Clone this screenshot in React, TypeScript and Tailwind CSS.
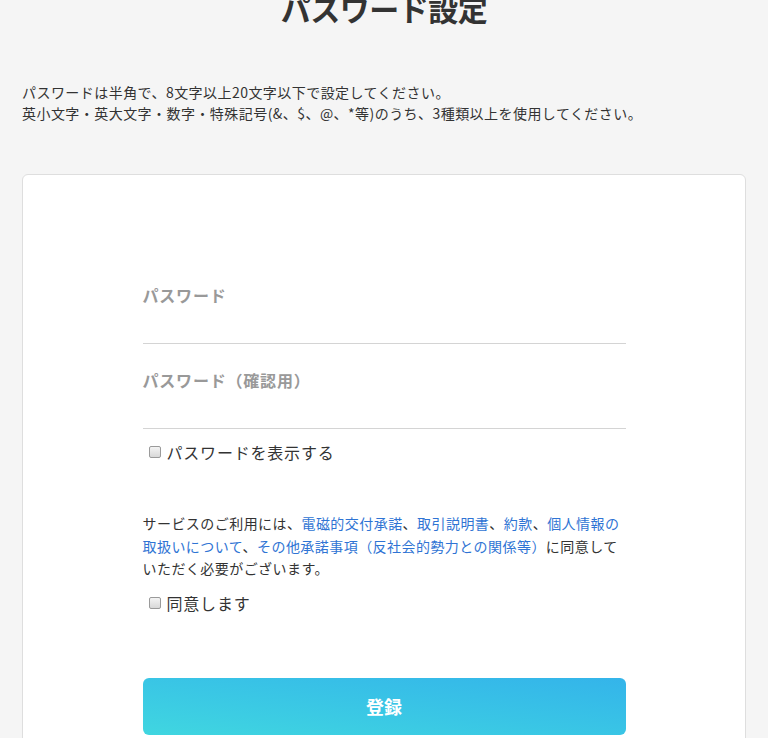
export default function App() {
  const font = { fontFamily: '"Noto Sans CJK JP", "Noto Sans", sans-serif' };

  return (
    <div className="min-h-[738px] bg-[#f5f5f5] px-[22px] text-[#333]" style={font}>
      <h1 className="mt-[-14px] text-center text-[30px] font-bold leading-[45px] tracking-[-0.5px] text-[#333]">
        パスワード設定
      </h1>

      <div className="mt-[51px] text-[14px] leading-[21px] tracking-[0.45px]">
        <p>パスワードは半角で、8文字以上20文字以下で設定してください。</p>
        <p>英小文字・英大文字・数字・特殊記号(&amp;、$、@、*等)のうち、3種類以上を使用してください。</p>
      </div>

      <div className="mt-[50px] rounded-[6px] border border-[#dedede] bg-white pb-10 pt-[108px]">
        <form className="mx-auto flex w-[483px] flex-col">
          <label className="flex flex-col">
            <span className="text-[16px] font-bold leading-6 tracking-[0.8px] text-[#999]">パスワード</span>
            <input type="password" className="h-[37px] border-b border-[#d4d4d4] outline-none" />
          </label>

          <label className="mt-[24px] flex flex-col">
            <span className="text-[16px] font-bold leading-6 tracking-[0.8px] text-[#999]">パスワード（確認用）</span>
            <input type="password" className="h-[37px] border-b border-[#d4d4d4] outline-none" />
          </label>

          <label className="mt-[11px] flex items-center gap-[6px] pl-[6px] text-[16px] leading-6 tracking-[0.8px]">
            <span className="h-[12px] w-[12px] shrink-0 rounded-[2px] border border-[#9a9a9a] bg-gradient-to-b from-[#f4f4f4] to-[#d8d8d8]" />
            パスワードを表示する
          </label>

          <p className="mt-[48px] text-[14px] leading-[22.5px] tracking-[0.45px]">
            サービスのご利用には、
            <a className="text-[#2f74d4]">電磁的交付承諾</a>、
            <a className="text-[#2f74d4]">取引説明書</a>、
            <a className="text-[#2f74d4]">約款</a>、
            <a className="text-[#2f74d4]">個人情報の取扱いについて</a>、
            <a className="text-[#2f74d4]">その他承諾事項（反社会的勢力との関係等）</a>
            に同意していただく必要がございます。
          </p>

          <label className="mt-[11px] flex items-center gap-[6px] pl-[6px] text-[16px] leading-6 tracking-[0.8px]">
            <span className="h-[12px] w-[12px] shrink-0 rounded-[2px] border border-[#9a9a9a] bg-gradient-to-b from-[#f4f4f4] to-[#d8d8d8]" />
            同意します
          </label>

          <button
            type="button"
            className="mt-[63px] h-[57px] rounded-[6px] bg-gradient-to-tr from-[#40d6e0] to-[#34b4ea] text-[18px] font-bold text-white"
          >
            登録
          </button>
        </form>
      </div>
    </div>
  );
}
